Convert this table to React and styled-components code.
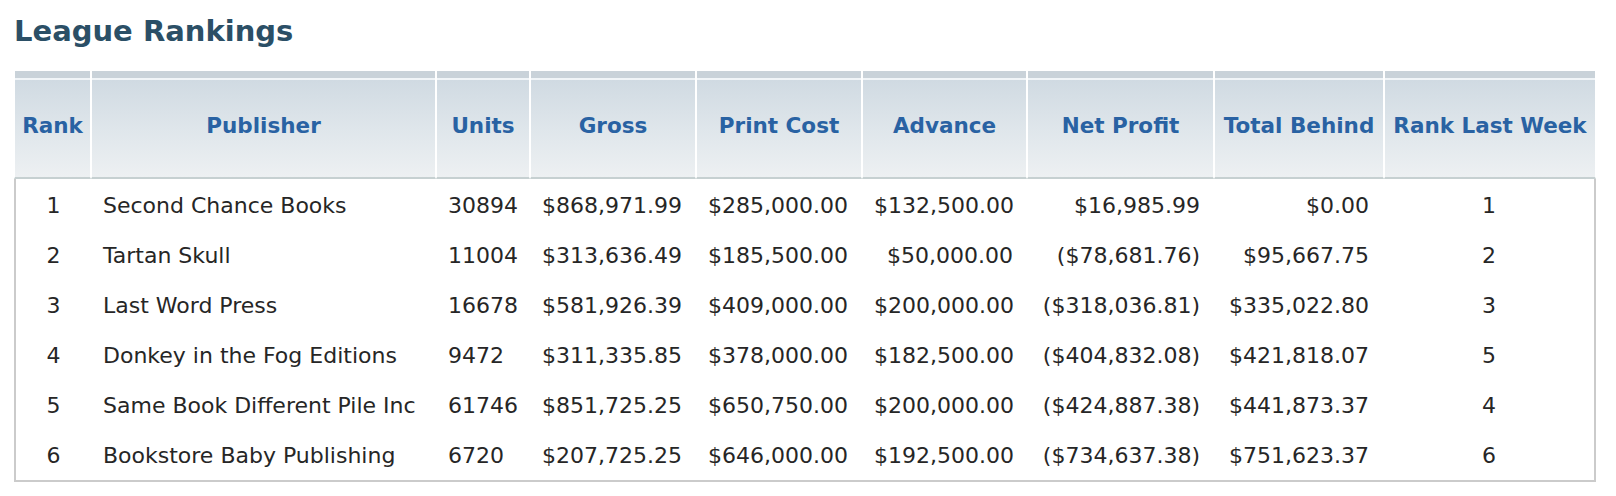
import React from "react";
import styled, { createGlobalStyle } from "styled-components";

const GlobalStyle = createGlobalStyle`
  html, body {
    margin: 0;
    padding: 0;
    background: #ffffff;
  }
  body {
    font-family: "DejaVu Sans", Verdana, sans-serif;
  }
`;

const Page = styled.div`
  padding: 14px 20px 16px 14px;
`;

const Title = styled.h1`
  margin: 0 0 23px 0;
  font-size: 29px;
  font-weight: bold;
  color: #2b4f66;
  line-height: 34px;
`;

const Table = styled.table`
  width: 1582px;
  table-layout: fixed;
  border-collapse: separate;
  border-spacing: 0;
`;

const HeadCell = styled.th`
  height: 108px;
  box-sizing: border-box;
  padding: 2px 4px 0;
  font-size: 21.5px;
  font-weight: bold;
  color: #2962a3;
  text-align: center;
  vertical-align: middle;
  white-space: nowrap;
  background: linear-gradient(
    to bottom,
    #c9d2d9 0px,
    #c9d2d9 7px,
    #f1f5f8 7px,
    #f1f5f8 9px,
    #d0dae2 9px,
    #dfe6eb 55%,
    #edf0f2 100%
  );
  border-left: 1px solid #ffffff;
  border-right: 1px solid #ffffff;
  border-bottom: 2px solid #c6d0d1;
`;

const Cell = styled.td`
  height: 50px;
  box-sizing: border-box;
  padding: ${(p) =>
    p.$align === "right" ? `0 ${p.$pr ?? 14}px 0 12px` : "0 12px"};
  font-size: 22px;
  color: #262626;
  text-align: ${(p) => p.$align || "left"};
  vertical-align: middle;
  white-space: nowrap;
  &:first-child {
    border-left: 2px solid #cbcbcb;
  }
  &:last-child {
    border-right: 2px solid #cbcbcb;
  }
`;

const Row = styled.tr`
  &:first-child > td {
    height: 51px;
    padding-top: 1px;
  }
  &:last-child > td {
    border-bottom: 2px solid #cbcbcb;
    height: 52px;
  }
`;

const columns = [
  { key: "rank", label: "Rank", width: 77, align: "center" },
  { key: "publisher", label: "Publisher", width: 345, align: "left" },
  { key: "units", label: "Units", width: 94, align: "left" },
  { key: "gross", label: "Gross", width: 166, align: "left" },
  { key: "print", label: "Print Cost", width: 166, align: "left" },
  { key: "advance", label: "Advance", width: 165, align: "right", pr: 14 },
  { key: "net", label: "Net Profit", width: 187, align: "right", pr: 14 },
  { key: "behind", label: "Total Behind", width: 170, align: "right", pr: 15 },
  { key: "last", label: "Rank Last Week", width: 212, align: "center" },
];

const rows = [
  {
    rank: "1",
    publisher: "Second Chance Books",
    units: "30894",
    gross: "$868,971.99",
    print: "$285,000.00",
    advance: "$132,500.00",
    net: "$16,985.99",
    behind: "$0.00",
    last: "1",
  },
  {
    rank: "2",
    publisher: "Tartan Skull",
    units: "11004",
    gross: "$313,636.49",
    print: "$185,500.00",
    advance: "$50,000.00",
    net: "($78,681.76)",
    behind: "$95,667.75",
    last: "2",
  },
  {
    rank: "3",
    publisher: "Last Word Press",
    units: "16678",
    gross: "$581,926.39",
    print: "$409,000.00",
    advance: "$200,000.00",
    net: "($318,036.81)",
    behind: "$335,022.80",
    last: "3",
  },
  {
    rank: "4",
    publisher: "Donkey in the Fog Editions",
    units: "9472",
    gross: "$311,335.85",
    print: "$378,000.00",
    advance: "$182,500.00",
    net: "($404,832.08)",
    behind: "$421,818.07",
    last: "5",
  },
  {
    rank: "5",
    publisher: "Same Book Different Pile Inc",
    units: "61746",
    gross: "$851,725.25",
    print: "$650,750.00",
    advance: "$200,000.00",
    net: "($424,887.38)",
    behind: "$441,873.37",
    last: "4",
  },
  {
    rank: "6",
    publisher: "Bookstore Baby Publishing",
    units: "6720",
    gross: "$207,725.25",
    print: "$646,000.00",
    advance: "$192,500.00",
    net: "($734,637.38)",
    behind: "$751,623.37",
    last: "6",
  },
];

export default function App() {
  return (
    <>
      <GlobalStyle />
      <Page>
        <Title>League Rankings</Title>
        <Table>
          <colgroup>
            {columns.map((c) => (
              <col key={c.key} style={{ width: c.width }} />
            ))}
          </colgroup>
          <thead>
            <tr>
              {columns.map((c) => (
                <HeadCell key={c.key}>{c.label}</HeadCell>
              ))}
            </tr>
          </thead>
          <tbody>
            {rows.map((r) => (
              <Row key={r.rank}>
                {columns.map((c) => (
                  <Cell key={c.key} $align={c.align} $pr={c.pr}>
                    {r[c.key]}
                  </Cell>
                ))}
              </Row>
            ))}
          </tbody>
        </Table>
      </Page>
    </>
  );
}
